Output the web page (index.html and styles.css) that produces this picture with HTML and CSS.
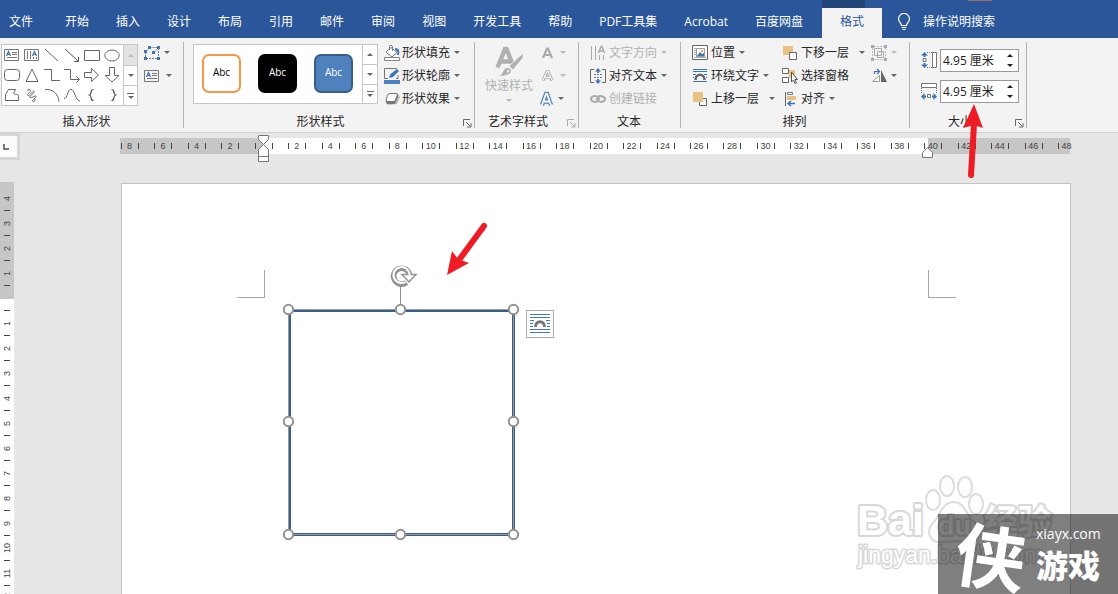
FILE: index.html
```html
<!DOCTYPE html>
<html lang="zh-CN">
<head>
<meta charset="utf-8">
<title>格式</title>
<meta name="viewport" content="width=device-width, initial-scale=1">
<link rel="stylesheet" href="styles.css">
</head>
<body>
<header class="topbar">
  <nav class="tabs">
    <button class="tab tab-file">文件</button>
    <button class="tab">开始</button>
    <button class="tab">插入</button>
    <button class="tab">设计</button>
    <button class="tab">布局</button>
    <button class="tab">引用</button>
    <button class="tab">邮件</button>
    <button class="tab">审阅</button>
    <button class="tab">视图</button>
    <button class="tab">开发工具</button>
    <button class="tab">帮助</button>
    <button class="tab">PDF工具集</button>
    <button class="tab">Acrobat</button>
    <button class="tab">百度网盘</button>
    <button class="tab tab-active">格式</button>
  </nav>
  <button class="tell-me">
    <svg width="14" height="18" viewBox="0 0 14 18" fill="none" stroke="#fff" stroke-width="1.2"><path d="M4.500 12.500C4.500 10 1.500 9 1.500 6a5.500 5.500 0 0 1 11 0c0 3-3 4-3 6.500zM4.500 14.500h5M5.500 16.500h3"/></svg>
    <span>操作说明搜索</span>
  </button>
  <span class="context-strip"></span>
  <span class="avatar-edge"></span>
</header>

<section class="ribbon">
  <div class="group group-insert">
    <div class="group-body">
      <div class="gallery">
        <div class="shape-grid">
          <button class="shape" aria-label="文本框"><svg width="16" height="16" viewBox="0 0 16 16" fill="none"><path d="M.5 2.500h14v11H.5zM8 5.500h5M8 7.500h5M3 10.500h10" stroke="#777"/><path d="M2.500 9l2-4.500 2 4.500M3 7.500h3" stroke="#3d70b2" stroke-width="1.200"/></svg></button>
          <button class="shape" aria-label="竖排文本框"><svg width="16" height="16" viewBox="0 0 16 16" fill="none"><path d="M.5 2.500h14v11H.5zM3.500 4v8M6.500 4v8M9.500 10v2M12.500 10v2" stroke="#777"/><path d="M8.500 9l2-4.500 2 4.500M9 7.500h3" stroke="#3d70b2" stroke-width="1.200"/></svg></button>
          <button class="shape" aria-label="直线"><svg width="16" height="16" viewBox="0 0 16 16" fill="none" stroke="#666"><path d="M1 2l13 12"/></svg></button>
          <button class="shape" aria-label="箭头"><svg width="16" height="16" viewBox="0 0 16 16" fill="none" stroke="#555"><path d="M1 2l13 12M14.500 10v4.500H10"/></svg></button>
          <button class="shape" aria-label="矩形"><svg width="16" height="16" viewBox="0 0 16 16" fill="none" stroke="#666"><path d="M.5 3.500h15v10H.5z"/></svg></button>
          <button class="shape" aria-label="椭圆"><svg width="16" height="16" viewBox="0 0 16 16" fill="none" stroke="#666"><ellipse cx="8" cy="8.500" rx="7.200" ry="5.500"/></svg></button>
          <button class="shape" aria-label="圆角矩形"><svg width="16" height="16" viewBox="0 0 16 16" fill="none" stroke="#666"><rect x=".5" y="2.500" width="15" height="11" rx="3"/></svg></button>
          <button class="shape" aria-label="三角形"><svg width="16" height="16" viewBox="0 0 16 16" fill="none" stroke="#666"><path d="M8 2l6 12.500H2z"/></svg></button>
          <button class="shape" aria-label="肘形连接符"><svg width="16" height="16" viewBox="0 0 16 16" fill="none" stroke="#666"><path d="M0 2.500h7.500v11H16"/></svg></button>
          <button class="shape" aria-label="肘形箭头"><svg width="16" height="16" viewBox="0 0 16 16" fill="none" stroke="#666"><path d="M0 2.500h6.500v10H15M12.500 9.500l3 3-3 3"/></svg></button>
          <button class="shape" aria-label="右箭头"><svg width="16" height="16" viewBox="0 0 16 16" fill="none" stroke="#666"><path d="M.5 5.500h7V1.500l7 6.500-7 6.500v-4h-7z"/></svg></button>
          <button class="shape" aria-label="下箭头"><svg width="16" height="16" viewBox="0 0 16 16" fill="none" stroke="#666"><path d="M5.500.5v8h-4.500L8 15l7-6.500h-4.500v-8z"/></svg></button>
          <button class="shape" aria-label="任意多边形"><svg width="16" height="16" viewBox="0 0 16 16" fill="none" stroke="#666"><path d="M1.500 7.500l3-5h7l-2 4c1 2 5-1 5 3v4H1.500z"/></svg></button>
          <button class="shape" aria-label="自由曲线"><svg width="16" height="16" viewBox="0 0 16 16" fill="none" stroke="#666"><path d="M3 3.500c3-2 4-1 3 1s-4 3-2 4 5-6 6-4-6 5-4 6 6-3 6-1-5 4-3 5 3-3 1-3"/></svg></button>
          <button class="shape" aria-label="弧形"><svg width="16" height="16" viewBox="0 0 16 16" fill="none" stroke="#666"><path d="M1 2.500c8-.5 13 4 14 12"/></svg></button>
          <button class="shape" aria-label="曲线"><svg width="16" height="16" viewBox="0 0 16 16" fill="none" stroke="#666"><path d="M0 11.500c4 0 3-9 7-9s4 11 9 11.500"/></svg></button>
          <button class="shape" aria-label="左大括号"><svg width="16" height="16" viewBox="0 0 16 16" fill="none" stroke="#555" stroke-width="1.200"><path d="M9.500 2.500c-4 0-1 4.500-4 5.500 3 1 0 5.500 4 5.500"/></svg></button>
          <button class="shape" aria-label="右大括号"><svg width="16" height="16" viewBox="0 0 16 16" fill="none" stroke="#555" stroke-width="1.200"><path d="M7.500 2.500c4 0 1 4.500 4 5.500-3 1 0 5.500-4 5.500"/></svg></button>
        </div>
        <div class="scroller">
          <button class="scroll-btn disabled" aria-label="上一行"><i class="caret up"></i></button>
          <button class="scroll-btn" aria-label="下一行"><i class="caret"></i></button>
          <button class="scroll-btn more" aria-label="其他"><i class="caret"></i></button>
        </div>
      </div>
      <div class="stack">
        <button class="cmd" aria-label="编辑形状"><svg width="16" height="16" viewBox="0 0 16 16"><path d="M5.500 2.500H14M14.500 3v10M2 13.500h12M1.500 12V7l4-4M10 8l4-5" fill="none" stroke="#777" stroke-dasharray="2 1"/><path d="M4 1h3v3H4zM13 1h3v3h-3zM0 5h3v3H0zM8 6h3v3H8zM0 12h3v3H0zM13 12h3v3h-3z" fill="#3d76b8"/></svg><i class="caret"></i></button>
        <button class="cmd" aria-label="绘制文本框"><svg width="18" height="16" viewBox="0 0 18 16" fill="none"><path d="M.5 2.500h14v11H.5zM8 5.500h5M8 7.500h5M3 10.500h10" stroke="#777"/><path d="M2.500 9l2-4.500 2 4.500M3 7.500h3" stroke="#3d70b2" stroke-width="1.200"/></svg><i class="caret"></i></button>
      </div>
    </div>
    <footer class="group-name">插入形状</footer>
  </div>

  <div class="group group-styles">
    <div class="group-body">
      <div class="gallery">
        <div class="thumbs">
          <button class="thumb thumb-orange">Abc</button>
          <button class="thumb thumb-black">Abc</button>
          <button class="thumb thumb-blue">Abc</button>
        </div>
        <div class="scroller">
          <button class="scroll-btn" aria-label="上一行"><i class="caret up"></i></button>
          <button class="scroll-btn" aria-label="下一行"><i class="caret"></i></button>
          <button class="scroll-btn more" aria-label="其他"><i class="caret"></i></button>
        </div>
      </div>
      <div class="stack">
        <button class="cmd"><svg width="16" height="16" viewBox="0 0 16 16"><path d="M.5 12.500h15v3H.5z" fill="#fff" stroke="#888"/><path d="M7 2.500l6 5-5 4.500-6-5z" fill="#fff" stroke="#777"/><path d="M5.500 5V1.500c0-1.500 3-1.500 3 0V6" fill="none" stroke="#777"/><path d="M11 3c4 0 5 3 4 7h-2c1-3 0-4-2-5z" fill="#3d76b8"/></svg><span>形状填充</span><i class="caret"></i></button>
        <button class="cmd"><svg width="16" height="16" viewBox="0 0 16 16"><path d="M13 .5H.5v10H4M12 10.500h2V7" fill="none" stroke="#777"/><path d="M0 12h16v4H0z" fill="#4a80bd"/><path d="M5 10l1.500-4L13 1l2 2-6 6z" fill="#3d76b8"/></svg><span>形状轮廓</span><i class="caret"></i></button>
        <button class="cmd"><svg width="16" height="16" viewBox="0 0 16 16"><path d="M4 4l10-1 2 3-3 7-9 1-2-3z" fill="#bbb"/><rect x="2.500" y="2.500" width="10" height="8" rx="2" transform="skewX(-14) translate(2 0)" fill="#fff" stroke="#777"/><path d="M1 10l2 1h7l3-7 1 1-3 8H3z" fill="#777"/></svg><span>形状效果</span><i class="caret"></i></button>
      </div>
    </div>
    <footer class="group-name">形状样式</footer>
    <button class="launcher" aria-label="设置形状格式"><svg width="9" height="9" viewBox="0 0 9 9" fill="none" stroke="#666"><path d="M.5 7V.5H7M3 3l4.500 4.500M8 4v4H4"/></svg></button>
  </div>

  <div class="group group-wordart">
    <div class="group-body">
      <button class="big-cmd disabled">
        <svg width="30" height="31" viewBox="0 0 30 31"><path d="M3.500 21.500L11 3h1.500l6 15M7 15.500h9" fill="none" stroke="#b0b0b0" stroke-width="4.500"/><path d="M29 7L15 20l4 4 10-12z" fill="#b0b0b0" stroke="#f3f3f3"/><path d="M5 30c5-1 3-8 9-8 6 2 3 8-9 8z" fill="#b0b0b0"/><path d="M13 24l3 1-3 2z" fill="#fff"/></svg>
        <span>快速样式</span><i class="caret"></i>
      </button>
      <div class="stack">
        <button class="cmd disabled" aria-label="文本填充"><svg width="16" height="16" viewBox="0 0 16 16"><path d="M3 13L7 3.500h1L12 13M5 10h5" fill="none" stroke="#aaa" stroke-width="2.200"/></svg><i class="caret"></i></button>
        <button class="cmd disabled" aria-label="文本轮廓"><svg width="16" height="16" viewBox="0 0 16 16" fill="none"><path d="M3 12.500L7 3.500h1l4 9M5 9.500h5" stroke="#aaa" stroke-width="3.200"/><path d="M3 12L7 3.500h1l4 8.500M5 9.500h5" stroke="#f8f8f8" stroke-width="1.300"/></svg><i class="caret"></i></button>
        <button class="cmd" aria-label="文本效果"><svg width="14" height="16" viewBox="0 0 14 16" fill="none"><path d="M2 14L6 3h1l4 11M4 10.500h5" stroke="#a9c9ea" stroke-width="5"/><path d="M2 14L6 3h1l4 11M4 10.500h5" stroke="#4a80bd" stroke-width="3.800"/><path d="M2 14L6 3h1l4 11M4 10.500h5" stroke="#fff" stroke-width="1.800"/></svg><i class="caret"></i></button>
      </div>
    </div>
    <footer class="group-name">艺术字样式</footer>
    <button class="launcher faint" aria-label="设置文本效果格式"><svg width="9" height="9" viewBox="0 0 9 9" fill="none" stroke="#666"><path d="M.5 7V.5H7M3 3l4.500 4.500M8 4v4H4"/></svg></button>
  </div>

  <div class="group group-text">
    <div class="group-body">
      <div class="stack">
        <button class="cmd disabled"><svg width="16" height="16" viewBox="0 0 16 16" fill="none"><path d="M1.500 1v14M5.500 1v14M9.500 10v5M13.500 10v5" stroke="#aaa"/><path d="M8.500 8L11 1.500h1L14.500 8M9.500 6h4" stroke="#aaa" stroke-width="1.500"/></svg><span>文字方向</span><i class="caret"></i></button>
        <button class="cmd"><svg width="16" height="16" viewBox="0 0 16 16" fill="none"><path d="M4 1.500H.5v13H4M12 1.500h3.500v13H12" stroke="#666"/><path d="M4 6.500h8M4 9.500h8" stroke="#777" stroke-dasharray="2 1"/><path d="M8 0l3 3.500H9V5H7V3.500H5zM8 16l3-3.500H9V11H7v1.500H5z" fill="#3d76b8"/></svg><span>对齐文本</span><i class="caret"></i></button>
        <button class="cmd disabled"><svg width="16" height="16" viewBox="0 0 16 16" fill="none" stroke="#aaa" stroke-width="2"><path d="M9 9.500C7 12 1 11 1 8s5-4 7-1.500c1 1 0 2-2 1.500"/><path d="M7 6.500C9 4 15 5 15 8s-5 4-7 1.500C7 8 8 7.500 10 8"/></svg><span>创建链接</span></button>
      </div>
    </div>
    <footer class="group-name">文本</footer>
  </div>

  <div class="group group-arrange">
    <div class="group-body">
      <div class="stack">
        <button class="cmd"><svg width="16" height="16" viewBox="0 0 16 16"><path d="M.5.5h15v14H.5z" fill="#fff" stroke="#666"/><path d="M2 3.500h2M2 5.500h2M2 7.500h2M2 9.500h2M2 12.500h12" stroke="#aaa"/><path d="M4.500 3.500h8v8h-8z" fill="#fff" stroke="#999"/><path d="M5 11l3-4 2 2 2-1v3z" fill="#3d76b8"/><path d="M9 5h2v2H9z" fill="#e8b25d"/></svg><span>位置</span><i class="caret"></i></button>
        <button class="cmd"><svg width="16" height="16" viewBox="0 0 16 16" fill="none"><path d="M1 1.500h14M1 3.500h14M1 6.500h3M12 6.500h3M1 9.500h1M14 9.500h1M1 13.500h14" stroke="#3d76b8"/><path d="M3.500 12c0-7 9-7 9 0" stroke="#666" stroke-width="2.500"/></svg><span>环绕文字</span><i class="caret"></i></button>
        <button class="cmd split"><svg width="16" height="16" viewBox="0 0 16 16"><path d="M8 7.500h6.500v7h-7V11" fill="#fff" stroke="#666"/><path d="M1 1h10v10H1z" fill="#e9c283"/></svg><span>上移一层</span><i class="caret"></i></button>
      </div>
      <div class="stack">
        <button class="cmd split"><svg width="16" height="16" viewBox="0 0 16 16"><path d="M1 1h10v9H1z" fill="#e9c283"/><path d="M7.500 7.500h7v7h-7z" fill="#fff" stroke="#666"/></svg><span>下移一层</span><i class="caret"></i></button>
        <button class="cmd"><svg width="16" height="16" viewBox="0 0 16 16"><path d="M.5.500h6v5h-6zM.5 9.500h6v5h-6z" fill="#fff" stroke="#666"/><path d="M7 2h6v8H7z" fill="#e9c283"/><path d="M9.500 4v10l2-2 1.500 3.500 1.500-.5-1.500-3.500h2.500z" fill="#fff" stroke="#555"/></svg><span>选择窗格</span></button>
        <button class="cmd"><svg width="16" height="16" viewBox="0 0 16 16"><path d="M3.500 1v14" stroke="#666"/><path d="M5.500 1.500h5v2h-5z" fill="#fff" stroke="#777"/><path d="M5 5h9v4H5z" fill="#e9c283"/><path d="M13 12.500H6M9 10l-3 2.500L9 15" stroke="#3d76b8" fill="none" stroke-width="1.500"/></svg><span>对齐</span><i class="caret"></i></button>
      </div>
      <div class="stack stack-icons">
        <button class="cmd disabled" aria-label="组合"><svg width="16" height="16" viewBox="0 0 16 16"><path d="M3 1.500h10M3 14.500h10M1.500 3v10M14.500 3v10" stroke="#bbb" stroke-dasharray="2 1"/><path d="M3.500 3.500h7v7h-7zM6.500 6.500h6v6h-6z" fill="none" stroke="#aaa"/><path d="M0 0h3v3H0zM13 0h3v3h-3zM0 13h3v3H0zM13 13h3v3h-3z" fill="#aaa"/></svg><i class="caret"></i></button>
        <button class="cmd" aria-label="旋转"><svg width="16" height="16" viewBox="0 0 16 16"><path d="M8.500 7.500v6H1.500z" fill="#fff" stroke="#999"/><path d="M10 2v12h6z" fill="#666"/><path d="M3.500 6V3.500H8M6 1l2.500 2.500L6 6" fill="none" stroke="#3d76b8" stroke-width="1.200"/></svg><i class="caret"></i></button>
      </div>
    </div>
    <footer class="group-name">排列</footer>
  </div>

  <div class="group group-size">
    <div class="group-body">
      <div class="size-row">
        <label for="h"><svg width="17" height="17" viewBox="0 0 17 17" role="img" aria-label="高度"><path d="M11.500.5h4v15h-4z" fill="#fff" stroke="#777"/><path d="M6 .5h5M6 15.500h5" stroke="#777" stroke-dasharray="1 1"/><path d="M2 6.500h3v3H2z" fill="#fff" stroke="#777"/><path d="M3.500 0L7 3.500H4.500V5h-2V3.500H0zM3.500 16L7 12.500H4.500V11h-2v1.500H0z" fill="#3d76b8"/></svg></label>
        <div class="spin"><input id="h" type="text" value="4.95 厘米"><span class="spin-btns"><button aria-label="增大高度"><i class="caret up"></i></button><button aria-label="减小高度"><i class="caret"></i></button></span></div>
      </div>
      <div class="size-row">
        <label for="w"><svg width="17" height="17" viewBox="0 0 17 17" role="img" aria-label="宽度"><path d="M.5.5h15v4H.5z" fill="#fff" stroke="#777"/><path d="M.5 5v6M15.500 5v6" stroke="#777" stroke-dasharray="1 1"/><path d="M6.500 11.500h3v3h-3z" fill="#fff" stroke="#777"/><path d="M0 13.500L3.500 10v2.500H5v2H3.500V17zM16 13.500L12.500 10v2.500H11v2h1.500V17z" fill="#3d76b8"/></svg></label>
        <div class="spin"><input id="w" type="text" value="4.95 厘米"><span class="spin-btns"><button aria-label="增大宽度"><i class="caret up"></i></button><button aria-label="减小宽度"><i class="caret"></i></button></span></div>
      </div>
    </div>
    <footer class="group-name">大小</footer>
    <button class="launcher" aria-label="高级版式"><svg width="9" height="9" viewBox="0 0 9 9" fill="none" stroke="#666"><path d="M.5 7V.5H7M3 3l4.500 4.500M8 4v4H4"/></svg></button>
  </div>
</section>

<main class="workspace">
  <div class="tab-stop"><svg width="6" height="6" viewBox="0 0 6 6"><path d="M1 0v5h5" fill="none" stroke="#777" stroke-width="2"/></svg></div>

  <div class="ruler-h">
    <span class="cell"><i></i><b>8</b><i></i></span><span class="cell"><i></i><b>6</b><i></i></span><span class="cell"><i></i><b>4</b><i></i></span><span class="cell"><i></i><b>2</b><i></i></span><span class="cell"><i></i><b></b><i></i></span><span class="cell"><i></i><b>2</b><i></i></span><span class="cell"><i></i><b>4</b><i></i></span><span class="cell"><i></i><b>6</b><i></i></span><span class="cell"><i></i><b>8</b><i></i></span><span class="cell"><i></i><b>10</b><i></i></span><span class="cell"><i></i><b>12</b><i></i></span><span class="cell"><i></i><b>14</b><i></i></span><span class="cell"><i></i><b>16</b><i></i></span><span class="cell"><i></i><b>18</b><i></i></span><span class="cell"><i></i><b>20</b><i></i></span><span class="cell"><i></i><b>22</b><i></i></span><span class="cell"><i></i><b>24</b><i></i></span><span class="cell"><i></i><b>26</b><i></i></span><span class="cell"><i></i><b>28</b><i></i></span><span class="cell"><i></i><b>30</b><i></i></span><span class="cell"><i></i><b>32</b><i></i></span><span class="cell"><i></i><b>34</b><i></i></span><span class="cell"><i></i><b>36</b><i></i></span><span class="cell"><i></i><b>38</b><i></i></span><span class="cell"><i></i><b>40</b><i></i></span><span class="cell"><i></i><b>42</b><i></i></span><span class="cell"><i></i><b>44</b><i></i></span><span class="cell"><i></i><b>46</b><i></i></span><span class="cell cell-last"><i></i><b>48</b></span>
    <svg class="indent-left" width="12" height="28" viewBox="0 0 12 28" fill="#fff" stroke="#777"><path d="M.5.5h10v4l-5 5-5-5zM5.500 9.500l5 5v12H.5v-12zM.5 21.500h10"/></svg>
    <svg class="indent-right" width="12" height="11" viewBox="0 0 12 11" fill="#fff" stroke="#777"><path d="M5.500.7l5 5v4.800H.5V5.700z"/></svg>
  </div>

  <div class="ruler-v">
    <span>4</span><i></i><span>3</span><i></i><span>2</span><i></i><span>1</span><i></i><span></span><i></i><span>1</span><i></i><span>2</span><i></i><span>3</span><i></i><span>4</span><i></i><span>5</span><i></i><span>6</span><i></i><span>7</span><i></i><span>8</span><i></i><span>9</span><i></i><span>10</span><i></i><span>11</span><i></i><span>12</span><i></i>
  </div>

  <article class="page">
    <span class="crop crop-left"></span>
    <span class="crop crop-right"></span>
    <svg class="drawn-shape" width="238" height="280" viewBox="0 0 238 280" fill="none">
      <path d="M7.500 46.500h224v224H7.500z" stroke="#385d8a" stroke-width="3"/>
      <path d="M6.500 45.500h225v225H6.500z" stroke="#999"/>
      <path d="M118.500 22v18" stroke="#8c8c8c"/>
      <path d="M124.500 18.500A8 8 0 1 1 127.500 11" stroke="#929292" stroke-width="5.500"/>
      <path d="M134 10.500l-7 7.500-7-7.500z" fill="#fff" stroke="#929292" stroke-width="1.500"/>
      <path d="M123.500 18A8 8 0 1 1 127.500 11.500" stroke="#fff" stroke-width="2"/>
      <g fill="#fff" stroke="#929292" stroke-width="2"><circle cx="6.500" cy="45.500" r="4.700"/><circle cx="118.500" cy="45.500" r="4.700"/><circle cx="231.500" cy="45.500" r="4.700"/><circle cx="6.500" cy="157.500" r="4.700"/><circle cx="231.500" cy="157.500" r="4.700"/><circle cx="6.500" cy="270.500" r="4.700"/><circle cx="118.500" cy="270.500" r="4.700"/><circle cx="231.500" cy="270.500" r="4.700"/></g>
    </svg>
    <button class="layout-options" aria-label="布局选项"><svg width="20" height="20" viewBox="0 0 20 20" fill="none"><path d="M0 .5h20M0 3.500h20M0 6.500h4M16 6.500h4M0 9.500h3M17 9.500h3M0 12.500h3M17 12.500h3M0 15.500h20M0 18.500h20" stroke="#4078b8"/><path d="M5.500 13c0-7 9-7 9 0" stroke="#777" stroke-width="3"/></svg></button>
  </article>
</main>

<svg class="arrow arrow-shape" width="44" height="56" viewBox="0 0 44 56"><path d="M39 4L14 38" stroke="#ee1c24" stroke-width="6" stroke-linecap="round"/><path d="M2 53L7 29l6 8 11 4z" fill="#ee1c24"/></svg>
<svg class="arrow arrow-size" width="24" height="76" viewBox="0 0 24 76"><path d="M9 71L12 20" stroke="#ee1c24" stroke-width="6" stroke-linecap="round"/><path d="M12 0L21 24l-9-3-11 3z" fill="#ee1c24"/></svg>

<svg class="baidu-mark" width="200" height="104" viewBox="0 0 200 104">
  <g fill="#fff" stroke="#dcdcdc" stroke-width="2">
    <ellipse cx="91" cy="13" rx="7" ry="10"/><ellipse cx="109" cy="14" rx="7" ry="10"/><ellipse cx="77" cy="27" rx="7" ry="10"/><ellipse cx="120" cy="31" rx="7" ry="10"/>
    <path d="M98 29c11 0 13 15 21 21 9 8 3 20-7 19-8-1-18-1-26 0-12 1-17-10-9-19 7-7 9-21 21-21z"/>
  </g>
  <g class="mark-text">
    <text class="mark-bai" x="1" y="62">Bai</text><text class="mark-du" x="82" y="62">du</text><text class="mark-cn" x="128" y="61">经验</text>
    <text class="mark-url" x="2" y="90">jingyan.baidu.com</text>
  </g>
</svg>

<aside class="site-badge">
  <span class="badge-glyph">侠</span>
  <div class="badge-text"><span class="badge-url">xiayx.com</span><strong>游戏</strong></div>
</aside>
</body>
</html>
```
FILE: styles.css
```css
* { box-sizing: border-box; }

body {
  margin: 0;
  height: 100vh;
  display: flex;
  flex-direction: column;
  position: relative;
  overflow: hidden;
  background: #e6e6e6;
  color: #262626;
  font: 12px/16px "Open Sans", "Noto Sans CJK SC", sans-serif;
}

button {
  border: 0;
  padding: 0;
  background: none;
  color: inherit;
  font: inherit;
  white-space: nowrap;
}

svg { display: block; flex: none; }

/* Tabs */
.topbar {
  display: flex;
  align-items: flex-end;
  position: relative;
  height: 38px;
  background: #2b579a;
  color: #fff;
}
.tabs { display: flex; }
.tab { height: 30px; padding: 0 14px 2px 13px; }
.tab-file { padding: 0 19px 2px 9px; }
.tab-active {
  margin-left: 5px;
  padding: 0 18px 2px;
  background: #f3f3f3;
  color: #2b579a;
}
.tell-me {
  display: flex;
  align-items: center;
  gap: 12px;
  height: 30px;
  padding: 0 0 2px 15px;
}
.context-strip {
  position: absolute;
  left: 822px;
  top: 0;
  width: 43px;
  height: 8px;
  background: #224478;
}
.avatar-edge {
  position: absolute;
  left: 968px;
  top: 0;
  width: 24px;
  height: 1px;
  background: #9b7069;
}

/* Ribbon */
.ribbon {
  display: flex;
  height: 95px;
  background: #f3f3f3;
  border-bottom: 1px solid #d0d0d0;
}
.group {
  display: flex;
  flex-direction: column;
  position: relative;
  padding-top: 3px;
}
.group::after {
  content: "";
  position: absolute;
  right: 0;
  top: 4px;
  bottom: 4px;
  width: 1px;
  background: #b4b4b4;
}
.group-body { display: flex; height: 69px; }
.group-name { padding-top: 4px; text-align: center; }
.group-insert { width: 184px; padding-left: 1px; }
.group-insert .group-name { padding-right: 12px; }
.group-insert .scroller { margin-left: 1px; width: 14px; }
.group-styles { width: 291px; padding-left: 9px; }
.group-styles .group-name { padding-right: 27px; }
.group-wordart { width: 104px; padding-left: 10px; }
.group-wordart .group-name { padding-right: 28px; }
.group-text { width: 102px; padding-left: 11px; }
.group-text .group-name { padding-right: 13px; }
.group-arrange { width: 229px; padding-left: 11px; }
.group-arrange .group-name { padding-right: 13px; }
.group-arrange .group-body { gap: 7px; }
.stack-icons { margin-left: -1px; }
.group-size { width: 117px; padding-left: 11px; }
.group-size .group-name { padding-right: 28px; }
.launcher { position: absolute; right: 3px; bottom: 4px; }
.faint { opacity: 0.5; }

.caret {
  flex: none;
  width: 0;
  height: 0;
  border: 3px solid transparent;
  border-top-color: #666;
  border-bottom-width: 0;
}
.caret.up {
  border-top-width: 0;
  border-bottom: 3px solid #666;
}
.disabled { color: #b0b0b0; }
.disabled .caret { border-top-color: #bbb; }
.disabled .caret.up { border-bottom-color: #bbb; }

.stack { display: flex; flex-direction: column; }
.gallery + .stack { margin-left: 6px; }
.cmd {
  display: flex;
  align-items: center;
  height: 23px;
  gap: 4px;
}
.cmd svg + span { margin-left: -1px; }
.group-styles .cmd svg + span { margin-left: -2px; }
.split .caret { margin-left: 6px; }

.gallery {
  display: flex;
  align-self: flex-start;
  margin-top: 3px;
  border: 1px solid #c6c6c6;
  background: #fff;
}
.shape-grid {
  display: grid;
  grid-template-columns: repeat(6, 20px);
  grid-template-rows: repeat(3, 20px);
}
.shape { display: grid; place-items: center; }
.scroller {
  display: grid;
  grid-template-rows: 1fr 1fr 1fr;
  width: 15px;
  border-left: 1px solid #c6c6c6;
}
.scroll-btn {
  display: flex;
  flex-direction: column;
  align-items: center;
  justify-content: center;
  gap: 2px;
}
.scroll-btn + .scroll-btn { border-top: 1px solid #c6c6c6; }
.scroll-btn.disabled { background: #e3e3e3; }
.more::before {
  content: "";
  width: 7px;
  height: 1px;
  background: #666;
}
.thumbs {
  display: flex;
  gap: 17px;
  padding: 9px 9px 10px 8px;
}
.thumb {
  width: 39px;
  height: 39px;
  padding-bottom: 3px;
  border: 2px solid #f79646;
  border-radius: 7px;
  color: #000;
  font-size: 10px;
}
.thumb-black { border-color: #000; background: #000; color: #fff; }
.thumb-blue { border-color: #385d8a; background: #4f81bd; color: #fff; }

.big-cmd {
  display: flex;
  flex-direction: column;
  align-items: center;
  padding-top: 5px;
  margin-right: 7px;
}
.big-cmd span { margin-top: 1px; }
.big-cmd .caret { margin-top: 5px; }
.group-wordart .cmd { gap: 4px; }

.group-size .group-body {
  flex-direction: column;
  gap: 8px;
  padding-top: 8px;
}
.size-row { display: flex; align-items: center; gap: 2px; }
.spin {
  display: flex;
  width: 79px;
  height: 23px;
  border: 1px solid #999;
  background: #fff;
}
.spin input {
  flex: 1;
  min-width: 0;
  border: 0;
  padding: 0 0 0 2px;
  background: none;
  color: #222;
  font: inherit;
}
.spin-btns { display: grid; width: 16px; padding: 1px 0; }
.spin-btns button { display: grid; place-items: center; }
.spin-btns .caret { border-top-color: #222; }
.spin-btns .caret.up { border-bottom-color: #222; }

/* Workspace */
.workspace {
  flex: 1;
  min-height: 0;
  display: grid;
  grid-template: 49px 1fr / 120px 1fr 47px;
}
.tab-stop {
  display: grid;
  place-items: center start;
  width: 20px;
  height: 27px;
  padding-left: 3px;
  border: solid #d6d6d6;
  border-width: 3px 3px 3px 0;
  background: #fcfcfc;
}
.ruler-h {
  display: flex;
  position: relative;
  height: 16px;
  margin: 5px 1px 0 0;
  background: linear-gradient(90deg, #c6c6c6 15%, #fff 15%, #fff 85%, #c6c6c6 85%);
  color: #444;
  font: 9px/17px "Liberation Sans", Arial, sans-serif;
}
.cell { display: flex; flex: 1; align-items: center; }
.cell-last { flex: none; width: 13px; }
.cell i { flex: none; width: 1px; height: 6px; margin-left: 1px; background: #444; }
.cell b {
  display: flex;
  flex: none;
  justify-content: center;
  width: 15px;
  font-weight: 400;
}
.indent-left { position: absolute; left: 138px; top: -3px; }
.indent-right { position: absolute; right: 136px; top: 9px; }

.ruler-v {
  display: flex;
  flex-direction: column;
  align-items: center;
  grid-row: 2;
  width: 14px;
  min-height: 0;
  overflow: hidden;
  padding-top: 4px;
  background: linear-gradient(#c6c6c6 117px, #fff 117px);
  color: #444;
  font: 9px/14px "Liberation Sans", Arial, sans-serif;
}
.ruler-v span {
  flex: none;
  display: flex;
  align-items: center;
  justify-content: center;
  height: 24px;
  writing-mode: vertical-rl;
  transform: rotate(180deg);
}
.ruler-v i { flex: none; width: 6px; height: 1px; background: #444; }

.page {
  grid-area: 2 / 2;
  position: relative;
  margin: 1px 0 0 1px;
  border: 1px solid #c2c2c2;
  border-bottom: 0;
  background: #fff;
}
.crop { position: absolute; top: 86px; width: 28px; height: 28px; border-bottom: 1px solid #a6a6a6; }
.crop-left { left: 115px; border-right: 1px solid #a6a6a6; }
.crop-right { right: 114px; border-left: 1px solid #a6a6a6; }
.drawn-shape { position: absolute; left: 160px; top: 80px; }
.layout-options {
  display: grid;
  place-items: center;
  position: absolute;
  left: 404px;
  top: 126px;
  width: 28px;
  height: 28px;
  border: 1px solid #aaa;
  background: #fff;
}

/* Annotations and marks laid over the window */
.arrow { position: absolute; }
.arrow-shape { left: 445px; top: 222px; }
.arrow-size { left: 962px; top: 104px; }
.baidu-mark { position: absolute; right: 62px; bottom: 17px; }
.mark-text {
  fill: #fff;
  stroke: #d8d8d8;
  stroke-width: 4px;
  stroke-linejoin: round;
  paint-order: stroke;
  font-family: "Liberation Sans", "Noto Sans CJK SC", sans-serif;
}
.mark-bai { font-size: 43px; font-weight: 700; }
.mark-du { font-size: 27px; font-weight: 700; }
.mark-cn { font-size: 34px; font-weight: 700; }
.mark-url { font-size: 23px; stroke-width: 3px; }

.site-badge {
  display: flex;
  align-items: center;
  gap: 10px;
  position: absolute;
  right: 0;
  bottom: 0;
  width: 180px;
  height: 80px;
  padding-left: 18px;
  background: rgba(0, 0, 0, 0.5);
  color: #fff;
}
.badge-glyph {
  font: 700 70px/80px "Noto Sans CJK SC", sans-serif;
  transform: rotate(8deg);
}
.badge-text { display: flex; flex-direction: column; gap: 4px; padding-bottom: 4px; }
.badge-url { font-size: 14px; line-height: 20px; }
.badge-text strong { font: 900 32px/32px "Noto Sans CJK SC", sans-serif; }
```
